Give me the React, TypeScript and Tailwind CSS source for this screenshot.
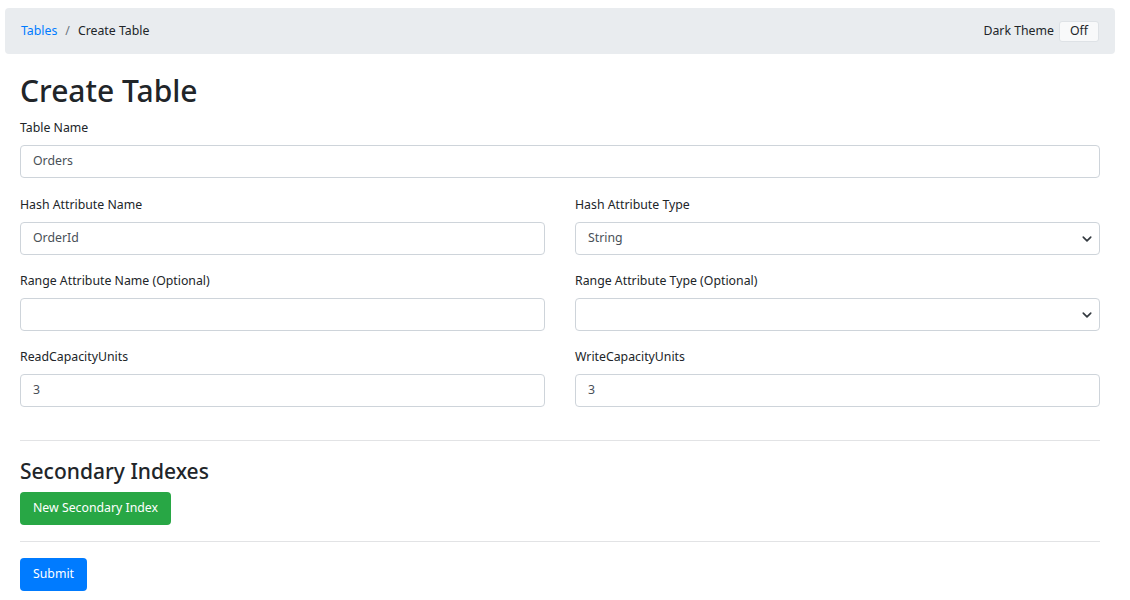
import React from "react";

const font = { fontFamily: '"Noto Sans", "Open Sans", Arial, sans-serif' };

function Chevron() {
	return (
		<svg
			className="pointer-events-none absolute right-[8px] top-1/2 -translate-y-1/2"
			width="10"
			height="10"
			viewBox="0 0 16 16"
		>
			<path
				d="M2 5l6 6 6-6"
				fill="none"
				stroke="#343a40"
				strokeWidth="2.6"
				strokeLinecap="round"
				strokeLinejoin="round"
			/>
		</svg>
	);
}

function Field({
	label,
	value,
	select,
}: {
	label: string;
	value: string;
	select?: boolean;
}) {
	return (
		<div className="flex flex-col">
			<label className="text-[12.3px] leading-[18px] text-[#212529] mb-[8px]">
				{label}
			</label>
			<div className="relative">
				<div className="h-[33px] w-full rounded-[4px] border border-[#ced4da] bg-white px-[12px] flex items-center text-[12.3px] text-[#495057]">
					{value}
				</div>
				{select && <Chevron />}
			</div>
		</div>
	);
}

export default function App() {
	return (
		<div className="bg-white min-h-[600px] w-[1115px] text-[#212529]" style={font}>
			<div className="pl-[5px] pt-[8px]">
				<div className="h-[46px] rounded-[4px] bg-[#e9ecef] flex items-center justify-between pl-[16px] pr-[16px]">
					<div className="flex items-center text-[12.3px]">
						<span className="text-[#007bff]">Tables</span>
						<span className="mx-[8px] text-[#6c757d]">/</span>
						<span className="text-[#212529]">Create Table</span>
					</div>
					<div className="flex items-center text-[12.3px]">
						<span className="mr-[5px]">Dark Theme</span>
						<div className="h-[21px] w-[40px] rounded-[3px] border border-[#dee2e6] bg-[#f8f9fa] flex items-center justify-center">
							Off
						</div>
					</div>
				</div>
			</div>

			<div className="pl-[20px] pr-[15px]">
				<h1 className="mt-[18px] text-[30px] leading-[38px] font-medium text-[#212529]">
					Create Table
				</h1>
				<div className="mt-[9px]">
					<Field label="Table Name" value="Orders" />
				</div>
				<div className="mt-[18px] grid grid-cols-2 gap-x-[30px] gap-y-[17px]">
					<Field label="Hash Attribute Name" value="OrderId" />
					<Field label="Hash Attribute Type" value="String" select />
					<Field label="Range Attribute Name (Optional)" value="" />
					<Field label="Range Attribute Type (Optional)" value="" select />
					<Field label="ReadCapacityUnits" value="3" />
					<Field label="WriteCapacityUnits" value="3" />
				</div>
				<hr className="mt-[33px] border-t border-[#e2e3e5]" />
				<h2 className="mt-[16px] text-[21px] leading-[28px] font-medium">
					Secondary Indexes
				</h2>
				<button className="mt-[7px] h-[33px] rounded-[4px] bg-[#28a745] px-[13px] text-[12.3px] text-white">
					New Secondary Index
				</button>
				<hr className="mt-[16px] border-t border-[#e2e3e5]" />
				<button className="mt-[16px] h-[33px] rounded-[4px] bg-[#007bff] px-[13px] text-[12.3px] text-white">
					Submit
				</button>
			</div>
		</div>
	);
}
